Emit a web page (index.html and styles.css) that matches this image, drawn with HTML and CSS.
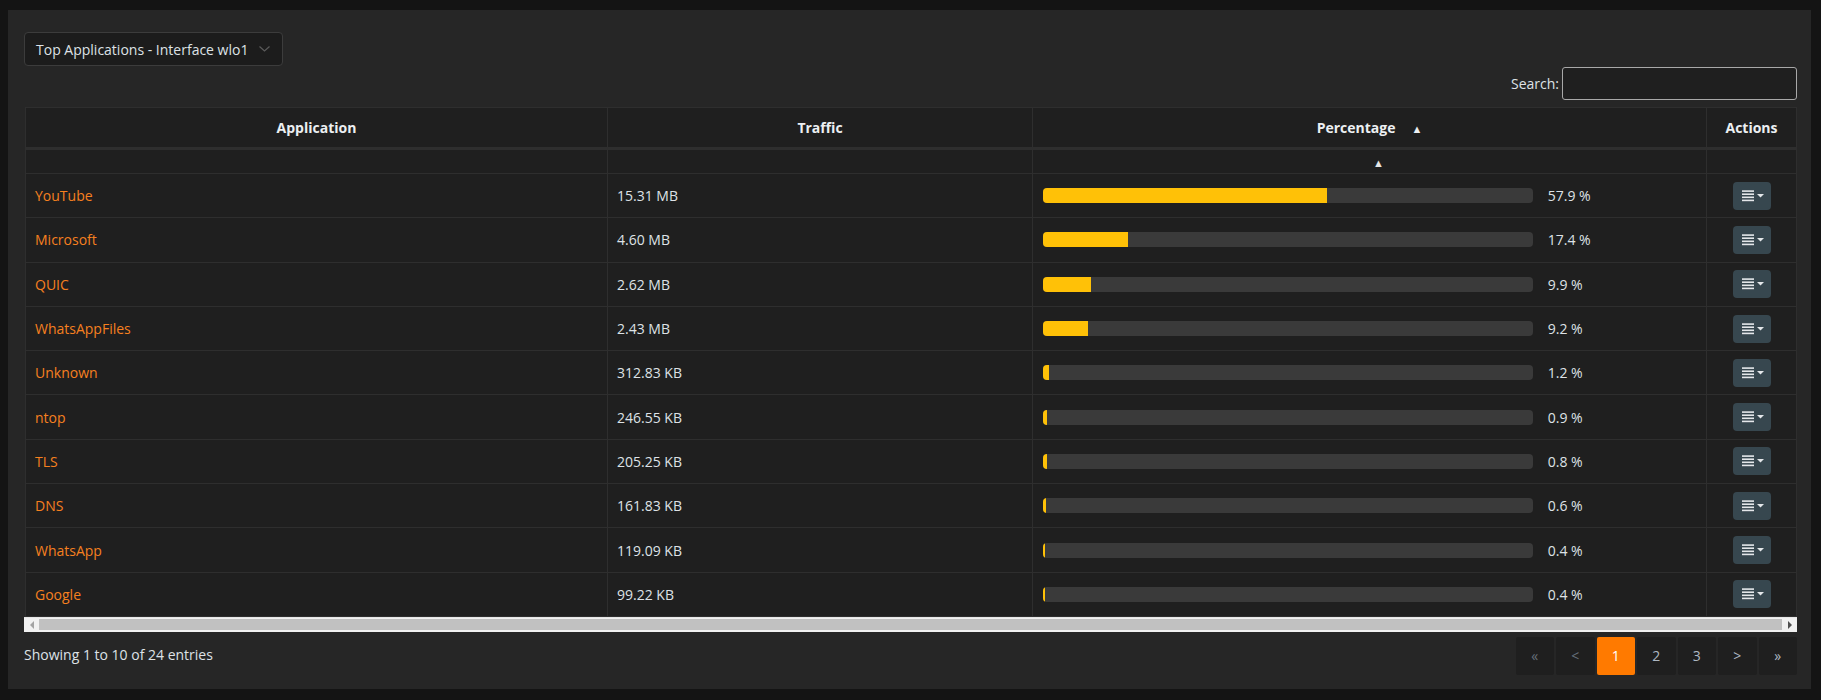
FILE: index.html
```html
<!DOCTYPE html>
<html lang="en">
<head>
<meta charset="utf-8">
<title>Top Applications</title>
<link rel="stylesheet" href="styles.css">
</head>
<body>
<div class="card">
  <div class="toolbar">
    <div class="select">
      <span class="select-label">Top Applications - Interface wlo1</span>
      <svg class="chev" width="11" height="6" viewBox="0 0 11 6"><path d="M0.5 0.5 L5.5 5 L10.5 0.5" fill="none" stroke="#5a5a5a" stroke-width="1.2"/></svg>
    </div>
  </div>
  <div class="search-row">
    <label class="search-label">Search:</label>
    <input class="search-input" type="text">
  </div>
  <div class="table-wrap">
    <table class="apps">
      <colgroup>
        <col class="c-app"><col class="c-traffic"><col class="c-pct"><col class="c-act">
      </colgroup>
      <thead>
        <tr class="head">
          <th>Application</th>
          <th>Traffic</th>
          <th><span>Percentage</span><span class="sort">▲</span></th>
          <th>Actions</th>
        </tr>
        <tr class="filter">
          <td></td><td></td><td><span class="sort-sub">▲</span></td><td></td>
        </tr>
      </thead>
      <tbody>
        <tr><td><a href="#">YouTube</a></td><td>15.31 MB</td><td><div class="pct"><div class="bar"><div class="fill" style="width:57.9%"></div></div><span class="pct-val">57.9 %</span></div></td><td class="act"><button class="btn-act"><svg width="23" height="12" viewBox="0 0 23 12"><rect x="0" y="0.3" width="12" height="1.6" fill="#e4e7ea"/><rect x="0" y="3.4" width="12" height="1.6" fill="#e4e7ea"/><rect x="0" y="6.5" width="12" height="1.6" fill="#e4e7ea"/><rect x="0" y="9.6" width="12" height="1.6" fill="#e4e7ea"/><path d="M15 4 L22 4 L18.5 7.5 Z" fill="#e4e7ea"/></svg></button></td></tr>
        <tr><td><a href="#">Microsoft</a></td><td>4.60 MB</td><td><div class="pct"><div class="bar"><div class="fill" style="width:17.4%"></div></div><span class="pct-val">17.4 %</span></div></td><td class="act"><button class="btn-act"><svg width="23" height="12" viewBox="0 0 23 12"><rect x="0" y="0.3" width="12" height="1.6" fill="#e4e7ea"/><rect x="0" y="3.4" width="12" height="1.6" fill="#e4e7ea"/><rect x="0" y="6.5" width="12" height="1.6" fill="#e4e7ea"/><rect x="0" y="9.6" width="12" height="1.6" fill="#e4e7ea"/><path d="M15 4 L22 4 L18.5 7.5 Z" fill="#e4e7ea"/></svg></button></td></tr>
        <tr><td><a href="#">QUIC</a></td><td>2.62 MB</td><td><div class="pct"><div class="bar"><div class="fill" style="width:9.9%"></div></div><span class="pct-val">9.9 %</span></div></td><td class="act"><button class="btn-act"><svg width="23" height="12" viewBox="0 0 23 12"><rect x="0" y="0.3" width="12" height="1.6" fill="#e4e7ea"/><rect x="0" y="3.4" width="12" height="1.6" fill="#e4e7ea"/><rect x="0" y="6.5" width="12" height="1.6" fill="#e4e7ea"/><rect x="0" y="9.6" width="12" height="1.6" fill="#e4e7ea"/><path d="M15 4 L22 4 L18.5 7.5 Z" fill="#e4e7ea"/></svg></button></td></tr>
        <tr><td><a href="#">WhatsAppFiles</a></td><td>2.43 MB</td><td><div class="pct"><div class="bar"><div class="fill" style="width:9.2%"></div></div><span class="pct-val">9.2 %</span></div></td><td class="act"><button class="btn-act"><svg width="23" height="12" viewBox="0 0 23 12"><rect x="0" y="0.3" width="12" height="1.6" fill="#e4e7ea"/><rect x="0" y="3.4" width="12" height="1.6" fill="#e4e7ea"/><rect x="0" y="6.5" width="12" height="1.6" fill="#e4e7ea"/><rect x="0" y="9.6" width="12" height="1.6" fill="#e4e7ea"/><path d="M15 4 L22 4 L18.5 7.5 Z" fill="#e4e7ea"/></svg></button></td></tr>
        <tr><td><a href="#">Unknown</a></td><td>312.83 KB</td><td><div class="pct"><div class="bar"><div class="fill" style="width:1.2%"></div></div><span class="pct-val">1.2 %</span></div></td><td class="act"><button class="btn-act"><svg width="23" height="12" viewBox="0 0 23 12"><rect x="0" y="0.3" width="12" height="1.6" fill="#e4e7ea"/><rect x="0" y="3.4" width="12" height="1.6" fill="#e4e7ea"/><rect x="0" y="6.5" width="12" height="1.6" fill="#e4e7ea"/><rect x="0" y="9.6" width="12" height="1.6" fill="#e4e7ea"/><path d="M15 4 L22 4 L18.5 7.5 Z" fill="#e4e7ea"/></svg></button></td></tr>
        <tr><td><a href="#">ntop</a></td><td>246.55 KB</td><td><div class="pct"><div class="bar"><div class="fill" style="width:0.9%"></div></div><span class="pct-val">0.9 %</span></div></td><td class="act"><button class="btn-act"><svg width="23" height="12" viewBox="0 0 23 12"><rect x="0" y="0.3" width="12" height="1.6" fill="#e4e7ea"/><rect x="0" y="3.4" width="12" height="1.6" fill="#e4e7ea"/><rect x="0" y="6.5" width="12" height="1.6" fill="#e4e7ea"/><rect x="0" y="9.6" width="12" height="1.6" fill="#e4e7ea"/><path d="M15 4 L22 4 L18.5 7.5 Z" fill="#e4e7ea"/></svg></button></td></tr>
        <tr><td><a href="#">TLS</a></td><td>205.25 KB</td><td><div class="pct"><div class="bar"><div class="fill" style="width:0.8%"></div></div><span class="pct-val">0.8 %</span></div></td><td class="act"><button class="btn-act"><svg width="23" height="12" viewBox="0 0 23 12"><rect x="0" y="0.3" width="12" height="1.6" fill="#e4e7ea"/><rect x="0" y="3.4" width="12" height="1.6" fill="#e4e7ea"/><rect x="0" y="6.5" width="12" height="1.6" fill="#e4e7ea"/><rect x="0" y="9.6" width="12" height="1.6" fill="#e4e7ea"/><path d="M15 4 L22 4 L18.5 7.5 Z" fill="#e4e7ea"/></svg></button></td></tr>
        <tr><td><a href="#">DNS</a></td><td>161.83 KB</td><td><div class="pct"><div class="bar"><div class="fill" style="width:0.6%"></div></div><span class="pct-val">0.6 %</span></div></td><td class="act"><button class="btn-act"><svg width="23" height="12" viewBox="0 0 23 12"><rect x="0" y="0.3" width="12" height="1.6" fill="#e4e7ea"/><rect x="0" y="3.4" width="12" height="1.6" fill="#e4e7ea"/><rect x="0" y="6.5" width="12" height="1.6" fill="#e4e7ea"/><rect x="0" y="9.6" width="12" height="1.6" fill="#e4e7ea"/><path d="M15 4 L22 4 L18.5 7.5 Z" fill="#e4e7ea"/></svg></button></td></tr>
        <tr><td><a href="#">WhatsApp</a></td><td>119.09 KB</td><td><div class="pct"><div class="bar"><div class="fill" style="width:0.4%"></div></div><span class="pct-val">0.4 %</span></div></td><td class="act"><button class="btn-act"><svg width="23" height="12" viewBox="0 0 23 12"><rect x="0" y="0.3" width="12" height="1.6" fill="#e4e7ea"/><rect x="0" y="3.4" width="12" height="1.6" fill="#e4e7ea"/><rect x="0" y="6.5" width="12" height="1.6" fill="#e4e7ea"/><rect x="0" y="9.6" width="12" height="1.6" fill="#e4e7ea"/><path d="M15 4 L22 4 L18.5 7.5 Z" fill="#e4e7ea"/></svg></button></td></tr>
        <tr><td><a href="#">Google</a></td><td>99.22 KB</td><td><div class="pct"><div class="bar"><div class="fill" style="width:0.4%"></div></div><span class="pct-val">0.4 %</span></div></td><td class="act"><button class="btn-act"><svg width="23" height="12" viewBox="0 0 23 12"><rect x="0" y="0.3" width="12" height="1.6" fill="#e4e7ea"/><rect x="0" y="3.4" width="12" height="1.6" fill="#e4e7ea"/><rect x="0" y="6.5" width="12" height="1.6" fill="#e4e7ea"/><rect x="0" y="9.6" width="12" height="1.6" fill="#e4e7ea"/><path d="M15 4 L22 4 L18.5 7.5 Z" fill="#e4e7ea"/></svg></button></td></tr>
      </tbody>
    </table>
    <div class="hscroll">
      <span class="arrow left"></span>
      <span class="thumb"></span>
      <span class="arrow right"></span>
    </div>
  </div>
  <div class="footer">
    <div class="info">Showing 1 to 10 of 24 entries</div>
    <div class="pager">
      <span class="pg disabled">«</span>
      <span class="pg disabled">&lt;</span>
      <span class="pg active">1</span>
      <span class="pg">2</span>
      <span class="pg">3</span>
      <span class="pg">&gt;</span>
      <span class="pg">»</span>
    </div>
  </div>
</div>
</body>
</html>
```
FILE: styles.css
```css
* { box-sizing: border-box; }
html, body { margin: 0; padding: 0; }
body {
  background: #141414;
  font-family: "Open Sans", "Noto Sans", sans-serif;
  font-size: 14px;
  color: #dee2e6;
  height: 700px;
  overflow: hidden;
}
.card {
  margin: 10px 10px 0 8px;
  width: 1803px;
  height: 679px;
  background: #262626;
  padding: 22px 14px 0 16px;
}
.toolbar { display: flex; height: 34px; }
.select {
  display: flex;
  align-items: center;
  width: 259px;
  height: 34px;
  background: #1c1c1c;
  border: 1px solid #3c3c3c;
  border-radius: 4px;
  padding: 0 12px 0 11px;
  color: #dee2e6;
}
.select-label { flex: 1; white-space: nowrap; }
.chev { margin-left: 8px; }
.search-row {
  display: flex;
  justify-content: flex-end;
  align-items: center;
  margin-top: 1px;
  height: 33px;
}
.search-label { margin-right: 3px; color: #dee2e6; }
.search-input {
  width: 235px;
  height: 33px;
  background: #1f1f1f;
  border: 1px solid #a8a8a8;
  border-radius: 3px;
  color: #dee2e6;
  font: inherit;
  padding: 0 8px;
}
.table-wrap { margin-top: 7px; padding: 0 1px; }
table.apps {
  width: 100%;
  table-layout: fixed;
  border-collapse: collapse;
  background: #1f1f1f;
  border: 1px solid #2e2e2e;
}
.c-app { width: 582px; }
.c-traffic { width: 425px; }
.c-pct { width: 674px; }
.c-act { width: 90px; }
.apps th, .apps td {
  border: 1px solid #2e2e2e;
  text-align: left;
}
.apps tr.head th {
  height: 41px;
  padding: 0 10px;
  text-align: center;
  font-weight: 700;
  color: #eceff2;
  border-bottom: 3px solid #2e2e2e;
  vertical-align: middle;
}
.sort { font-size: 11px; margin-left: 16px; color: #eceff2; }
.apps tr.filter td { height: 25px; padding: 0; text-align: center; }
.sort-sub { font-size: 11px; padding-left: 18px; color: #e6e6e6; }
.apps tbody td {
  height: 44.3px;
  padding: 0 10px 0 9px;
  vertical-align: middle;
  white-space: nowrap;
}
.apps a { color: #f6801f; text-decoration: none; }
.pct { display: flex; align-items: center; padding-left: 1px; }
.bar {
  width: 75%;
  height: 15px;
  background: #3a3a3a;
  border-radius: 4px;
  overflow: hidden;
}
.fill { height: 100%; background: #ffc107; }
.pct-val { margin-left: 15px; }
.apps td.act { text-align: center; padding: 0; }
.btn-act {
  display: inline-flex;
  align-items: center;
  justify-content: center;
  width: 38px;
  height: 28px;
  background: #37474f;
  border: none;
  border-radius: 4px;
  padding: 0 0 0 3px;
  vertical-align: middle;
}
.hscroll {
  display: flex;
  align-items: center;
  height: 15px;
  margin: 0 -1px;
  background: #f1f1f1;
  border-top: 1px solid #e6e6e6;
}
.arrow { width: 15px; height: 15px; display: flex; align-items: center; justify-content: center; }
.arrow.left::before {
  content: "";
  border-top: 4px solid transparent;
  border-bottom: 4px solid transparent;
  border-right: 4px solid #a3a3a3;
}
.arrow.right::before {
  content: "";
  border-top: 4px solid transparent;
  border-bottom: 4px solid transparent;
  border-left: 4px solid #505050;
}
.thumb { flex: 1; height: 11px; background: #c1c1c1; }
.footer {
  display: flex;
  justify-content: space-between;
  align-items: center;
  margin-top: 5px;
  height: 38px;
}
.info { color: #dee2e6; margin-top: -3px; }
.pager { display: flex; gap: 2px; }
.pg {
  width: 38.5px;
  height: 38px;
  display: flex;
  align-items: center;
  justify-content: center;
  background: #1f1f1f;
  color: #aeb8c2;
  border-radius: 2px;
}
.pg.disabled { color: #66707a; }
.pg.active { background: #ff7a00; color: #ffffff; }
```
